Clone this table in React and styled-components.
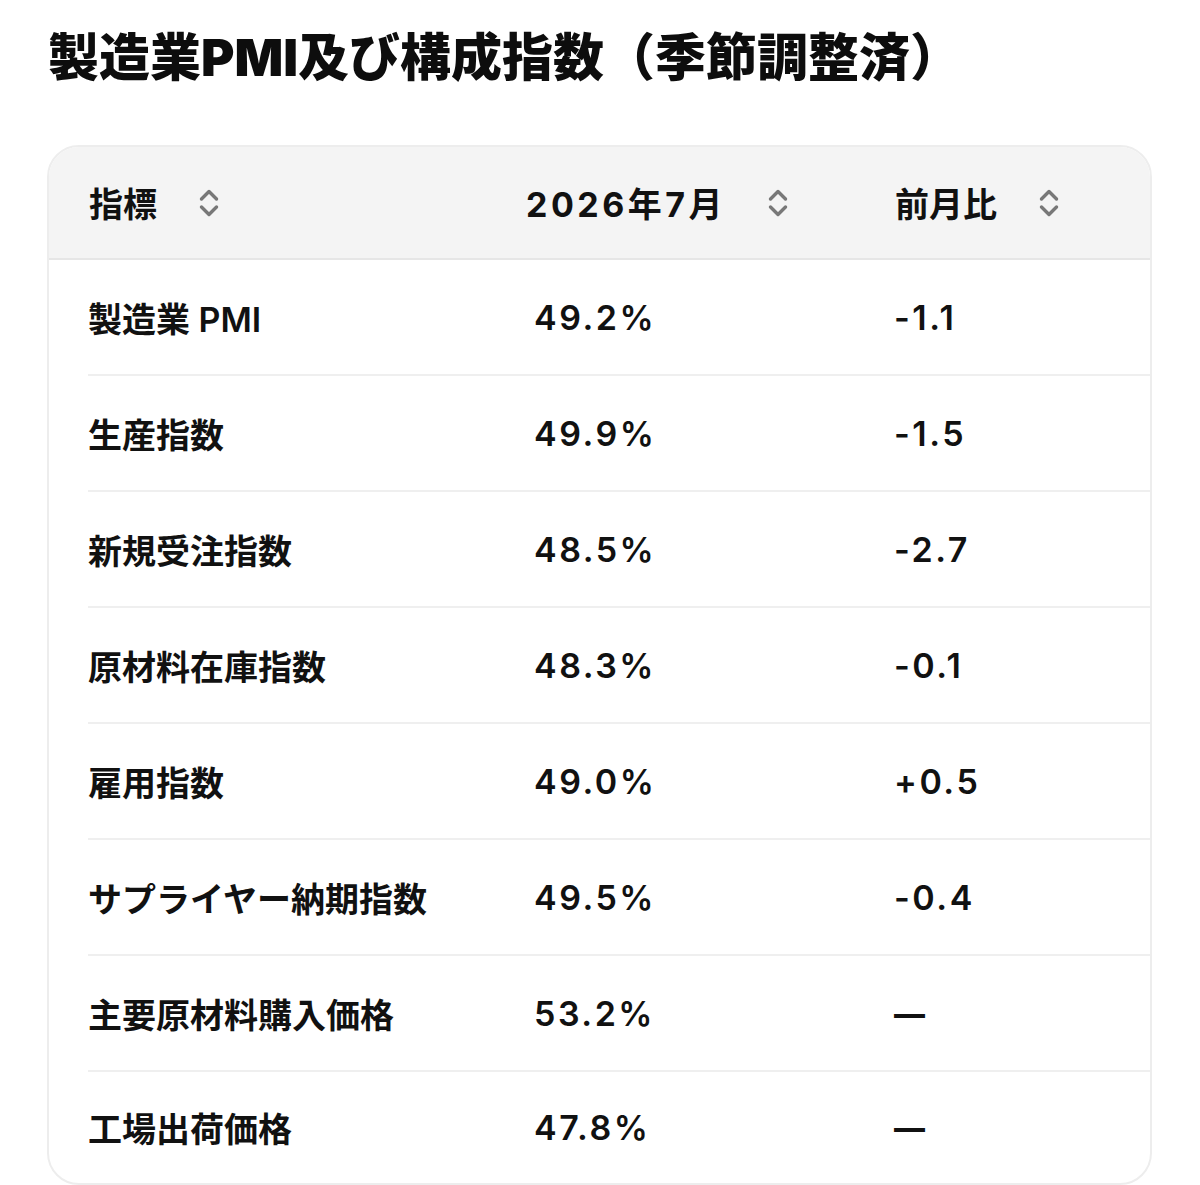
import React from "react";
import styled, { createGlobalStyle } from "styled-components";

const GlobalStyle = createGlobalStyle`
  body {
    margin: 0;
    background: #ffffff;
    color: #111111;
    font-family: Inter, "Noto Sans CJK JP", sans-serif;
  }
`;

const rows = [
  { name: "製造業 PMI", value: "49.2%", diff: "-1.1" },
  { name: "生産指数", value: "49.9%", diff: "-1.5" },
  { name: "新規受注指数", value: "48.5%", diff: "-2.7" },
  { name: "原材料在庫指数", value: "48.3%", diff: "-0.1" },
  { name: "雇用指数", value: "49.0%", diff: "+0.5" },
  { name: "サプライヤー納期指数", value: "49.5%", diff: "-0.4" },
  { name: "主要原材料購入価格", value: "53.2%", diff: "—" },
  { name: "工場出荷価格", value: "47.8%", diff: "—" },
];

const SortIcon = () => (
  <svg width="22" height="30" viewBox="0 0 22 30" fill="none">
    {/* up / down chevrons */}
    <path
      d="M3.5 11 L11 3.5 L18.5 11"
      stroke="#787878"
      strokeWidth="3.4"
      strokeLinecap="round"
      strokeLinejoin="round"
    />
    <path
      d="M3.5 19 L11 26.5 L18.5 19"
      stroke="#787878"
      strokeWidth="3.4"
      strokeLinecap="round"
      strokeLinejoin="round"
    />
  </svg>
);

const App = () => {
  return (
    <Page>
      <GlobalStyle />
      <Title>製造業PMI及び構成指数（季節調整済）</Title>

      <Card>
        <HeaderRow>
          <HeadCell pad={40}>
            指標
            <SortIcon />
          </HeadCell>
          <HeadCell pad={39}>
            <Spaced>2026年7月</Spaced>
            <SortIcon />
          </HeadCell>
          <HeadCell pad={39}>
            前月比
            <SortIcon />
          </HeadCell>
        </HeaderRow>

        {rows.map((row) => (
          <Row key={row.name}>
            <Cell pad={0}>{row.name}</Cell>
            <Cell pad={48} numeric>
              {row.value}
            </Cell>
            <Cell pad={39} numeric>
              {row.diff === "—" ? <Dash>—</Dash> : row.diff}
            </Cell>
          </Row>
        ))}
      </Card>
    </Page>
  );
};

const Page = styled.div`
  padding: 27px 46px 0 47px;
`;

const Title = styled.h1`
  margin: 0 0 0 1px;
  font-size: 51px;
  line-height: 62px;
  font-weight: 900;
  color: #0d0d0d;
`;

const Card = styled.div`
  margin-top: 56px;
  width: 1105px;
  box-sizing: border-box;
  border: 2px solid #ededed;
  border-radius: 32px;
  overflow: hidden;
  background: #ffffff;
`;

const HeaderRow = styled.div`
  display: grid;
  grid-template-columns: 438px 369px 1fr;
  height: 111px;
  background: #f4f4f4;
  border-bottom: 2px solid #e6e6e6;
`;

const HeadCell = styled.div`
  display: flex;
  align-items: center;
  gap: 41px;
  padding-left: ${(p) => p.pad}px;
  font-size: 34px;
  font-weight: 700;
  color: #111111;
`;

const Spaced = styled.span`
  letter-spacing: 3.5px;
`;

const Row = styled.div`
  display: grid;
  grid-template-columns: 398px 369px 1fr;
  height: 114px;
  margin-left: 39px;
  border-bottom: 2px solid #efefef;

  &:last-child {
    border-bottom: none;
    height: 111px;
  }
`;

const Cell = styled.div`
  display: flex;
  align-items: center;
  padding-left: ${(p) => p.pad}px;
  font-size: 34px;
  font-weight: 600;
  letter-spacing: ${(p) => (p.numeric ? "2.5px" : "0")};
  color: #111111;
  white-space: nowrap;
`;

const Dash = styled.span`
  font-family: Inter, sans-serif;
  font-weight: 800;
  font-size: 31px;
  letter-spacing: 0;
`;

export default App;
